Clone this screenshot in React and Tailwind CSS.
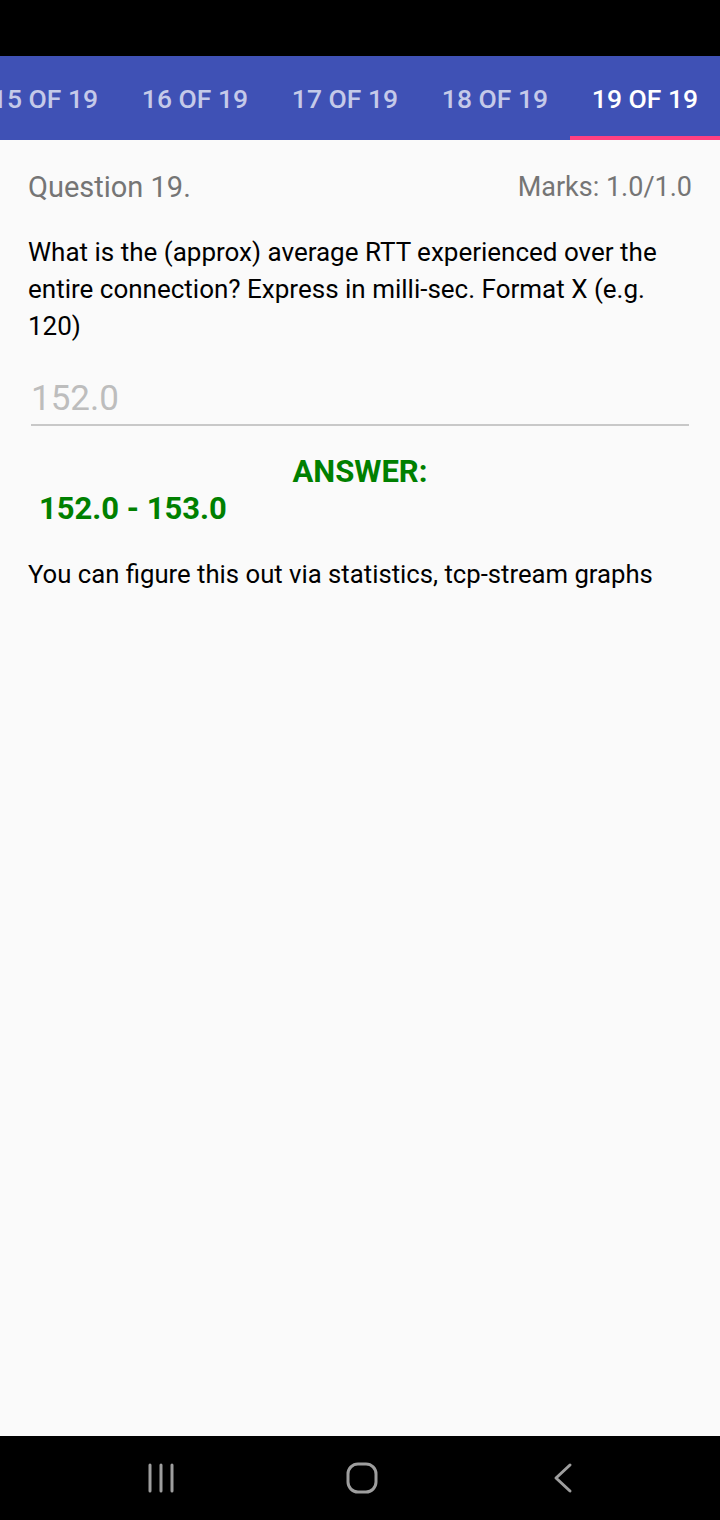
import React from "react";

const tabs = ["15 OF 19", "16 OF 19", "17 OF 19", "18 OF 19", "19 OF 19"];

const App = () => {
    return (
        <div
            className="w-[720px] h-[1520px] flex flex-col bg-[#fafafa] overflow-hidden"
            style={{ fontFamily: "Roboto, 'Liberation Sans', sans-serif" }}
        >
            {/* status bar */}
            <div className="h-[56px] bg-black shrink-0" />

            {/* tabs */}
            <div className="h-[84px] bg-[#3f51b5] shrink-0 flex overflow-hidden">
                <div className="flex ml-[-30px]">
                    {tabs.map((t, i) => {
                        const active = i === tabs.length - 1;
                        return (
                            <div
                                key={t}
                                className={
                                    "w-[150px] h-[84px] shrink-0 flex items-center justify-center text-[26.5px] font-medium whitespace-nowrap border-b-4 pt-[6px] " +
                                    (active
                                        ? "text-white border-[#ff4081]"
                                        : "text-[#c5cae9] border-transparent")
                                }
                            >
                                {t}
                            </div>
                        );
                    })}
                </div>
            </div>

            {/* content */}
            <div className="flex-1 px-[28px] pt-[29px]">
                <div className="flex justify-between items-center h-[36px]">
                    <span className="text-[29px] text-[#757575] leading-[36px]">Question 19.</span>
                    <span className="text-[27px] text-[#757575] leading-[36px]">Marks: 1.0/1.0</span>
                </div>
                <p className="mt-[29px] text-[26px] leading-[37px] text-black">
                    What is the (approx) average RTT experienced over the entire connection? Express in milli-sec. Format X (e.g. 120)
                </p>
                <div className="mt-[33px] mx-[3px] border-b-2 border-[#c8c8c8] pb-[4px]">
                    <div className="text-[35px] text-[#bdbdbd] leading-[42px]">152.0</div>
                </div>
                <div className="mt-[27px] text-center text-[31px] font-bold text-[#008000] leading-[37px]">
                    ANSWER:
                </div>
                <div className="pl-[11px] text-[31px] font-bold text-[#008000] leading-[37px]">
                    152.0 - 153.0
                </div>
                <p className="mt-[30px] text-[25.7px] leading-[34px] text-black">
                    You can figure this out via statistics, tcp-stream graphs
                </p>
            </div>

            {/* nav bar */}
            <div className="h-[84px] bg-black shrink-0 flex items-center pl-[60px]">
                <div className="w-[201px] flex justify-center">
                    <svg width="28" height="30" viewBox="0 0 28 30">
                        <g stroke="#9e9e9e" strokeWidth="3" strokeLinecap="round">
                            <line x1="3" y1="2" x2="3" y2="28" />
                            <line x1="14" y1="2" x2="14" y2="28" />
                            <line x1="25" y1="2" x2="25" y2="28" />
                        </g>
                    </svg>
                </div>
                <div className="w-[201px] flex justify-center">
                    <svg width="32" height="32" viewBox="0 0 32 32">
                        <rect x="2" y="2" width="28" height="28" rx="10" fill="none" stroke="#9e9e9e" strokeWidth="3" />
                    </svg>
                </div>
                <div className="w-[201px] flex justify-center">
                    <svg width="20" height="32" viewBox="0 0 20 32">
                        <polyline points="17,3 3,16 17,29" fill="none" stroke="#9e9e9e" strokeWidth="3" strokeLinecap="round" strokeLinejoin="round" />
                    </svg>
                </div>
            </div>
        </div>
    );
};

export default App;
